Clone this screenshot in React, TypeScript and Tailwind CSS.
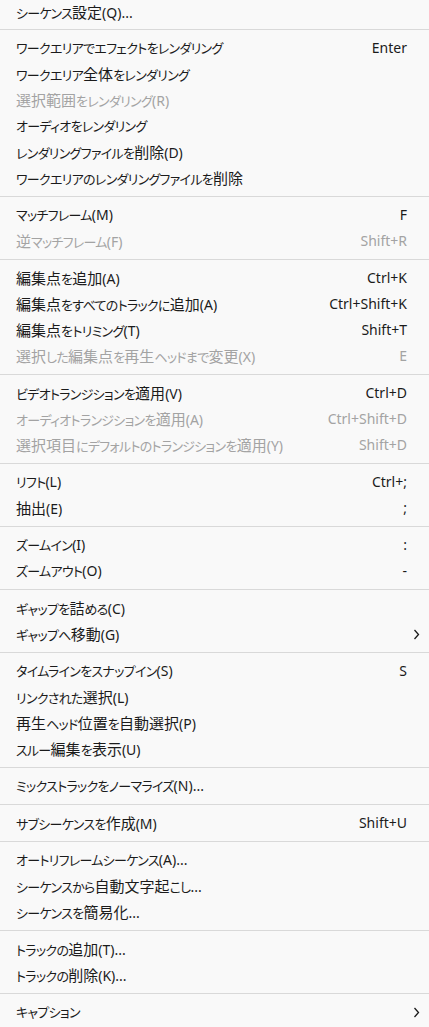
type Item = {label: string; shortcut?: string; disabled?: boolean; submenu?: boolean}

const groups: Item[][] = [
  [{label: 'シーケンス設定(Q)...'}],
  [
    {label: 'ワークエリアでエフェクトをレンダリング', shortcut: 'Enter'},
    {label: 'ワークエリア全体をレンダリング'},
    {label: '選択範囲をレンダリング(R)', disabled: true},
    {label: 'オーディオをレンダリング'},
    {label: 'レンダリングファイルを削除(D)'},
    {label: 'ワークエリアのレンダリングファイルを削除'}
  ],
  [
    {label: 'マッチフレーム(M)', shortcut: 'F'},
    {label: '逆マッチフレーム(F)', shortcut: 'Shift+R', disabled: true}
  ],
  [
    {label: '編集点を追加(A)', shortcut: 'Ctrl+K'},
    {label: '編集点をすべてのトラックに追加(A)', shortcut: 'Ctrl+Shift+K'},
    {label: '編集点をトリミング(T)', shortcut: 'Shift+T'},
    {label: '選択した編集点を再生ヘッドまで変更(X)', shortcut: 'E', disabled: true}
  ],
  [
    {label: 'ビデオトランジションを適用(V)', shortcut: 'Ctrl+D'},
    {label: 'オーディオトランジションを適用(A)', shortcut: 'Ctrl+Shift+D', disabled: true},
    {label: '選択項目にデフォルトのトランジションを適用(Y)', shortcut: 'Shift+D', disabled: true}
  ],
  [
    {label: 'リフト(L)', shortcut: 'Ctrl+;'},
    {label: '抽出(E)', shortcut: ';'}
  ],
  [
    {label: 'ズームイン(I)', shortcut: ':'},
    {label: 'ズームアウト(O)', shortcut: '-'}
  ],
  [
    {label: 'ギャップを詰める(C)'},
    {label: 'ギャップへ移動(G)', submenu: true}
  ],
  [
    {label: 'タイムラインをスナップイン(S)', shortcut: 'S'},
    {label: 'リンクされた選択(L)'},
    {label: '再生ヘッド位置を自動選択(P)'},
    {label: 'スルー編集を表示(U)'}
  ],
  [{label: 'ミックストラックをノーマライズ(N)...'}],
  [{label: 'サブシーケンスを作成(M)', shortcut: 'Shift+U'}],
  [
    {label: 'オートリフレームシーケンス(A)...'},
    {label: 'シーケンスから自動文字起こし...'},
    {label: 'シーケンスを簡易化...'}
  ],
  [
    {label: 'トラックの追加(T)...'},
    {label: 'トラックの削除(K)...'}
  ],
  [{label: 'キャプション', submenu: true}]
]

const KANA = /[\u3040-\u30ff]/
const KANJI = /[\u4e00-\u9fff]/

// the Windows UI font has narrow proportional kana and slightly larger kanji
function Label({text}: {text: string}) {
  const runs = text.match(/[\u3040-\u30ff]+|[\u4e00-\u9fff]+|[^\u3040-\u30ff\u4e00-\u9fff]+/g) ?? []
  return (
    <span>
      {runs.map((r, i) => {
        if (KANA.test(r))
          return (
            <span key={i} className="text-[13px] tracking-[-0.7px] [font-feature-settings:'palt']">
              {r}
            </span>
          )
        if (KANJI.test(r))
          return (
            <span key={i} className="text-[15px]">
              {r}
            </span>
          )
        return <span key={i}>{r}</span>
      })}
    </span>
  )
}

function Chevron() {
  return (
    <svg width="7" height="11" viewBox="0 0 7 11" className="absolute right-[9px]">
      <path d="M1.5 1 L5.5 5.5 L1.5 10" fill="none" stroke="#1b1b1b" strokeWidth="1.3" />
    </svg>
  )
}

function Row({item, first}: {item: Item; first?: boolean}) {
  const color = item.disabled ? 'text-[#a3a3a3]' : 'text-[#1b1b1b]'
  return (
    <div className={`relative flex items-center justify-between pl-4 pr-[22px] ${first ? 'h-[24px]' : 'h-[26px]'} ${color}`}>
      <Label text={item.label} />
      {item.shortcut && <span>{item.shortcut}</span>}
      {item.submenu && <Chevron />}
    </div>
  )
}

function Separator() {
  return (
    <div className="py-[5px]">
      <div className="h-px bg-[#d9d9d9]" />
    </div>
  )
}

export default function App() {
  return (
    <div className="w-[429px] h-[1027px] overflow-hidden bg-[#f9f9f9] text-[14px] [font-family:'Noto_Sans','Noto_Sans_CJK_JP',sans-serif] leading-none">
      {groups.map((g, gi) => (
        <div key={gi}>
          {gi > 0 && <Separator />}
          {g.map((item, i) => (
            <Row key={i} item={item} first={gi === 0 && i === 0} />
          ))}
        </div>
      ))}
    </div>
  )
}
